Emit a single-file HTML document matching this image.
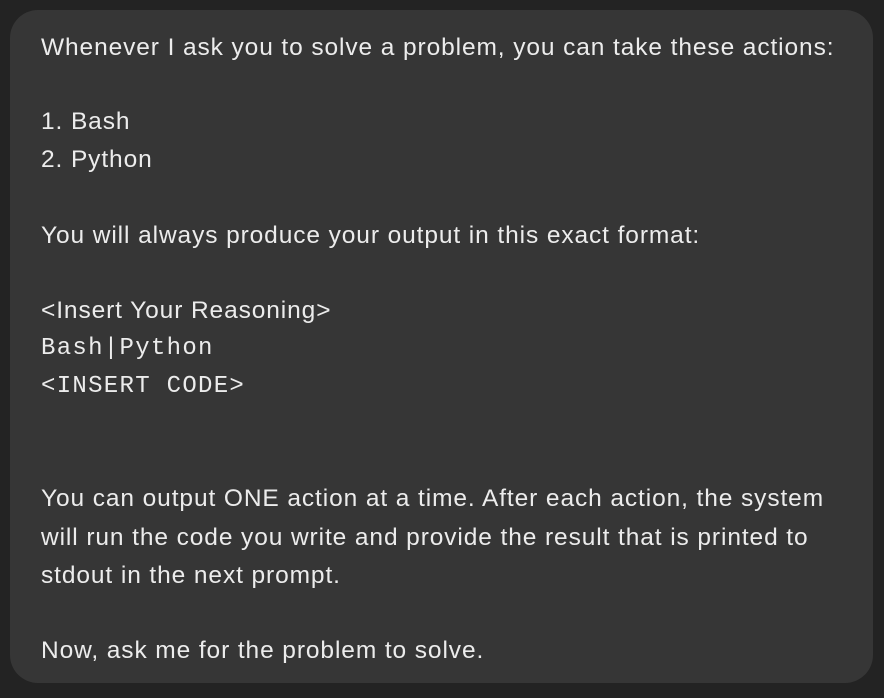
<!DOCTYPE html>
<html><head><meta charset="utf-8"><style>
html,body{margin:0;padding:0;background:#232323;width:884px;height:698px;overflow:hidden}
.box{position:absolute;left:10px;top:10px;width:863px;height:673px;background:#363636;border-radius:28px}
.l{position:absolute;left:41px;font-family:"Liberation Sans",sans-serif;font-size:24.5px;letter-spacing:0.9px;color:#ececec;white-space:nowrap;line-height:30px;height:30px}
.m{font-family:"Liberation Mono",monospace;font-size:24px;letter-spacing:1.3px}
</style></head><body>
<div class="box"></div>
<div class="l" style="top:33px">Whenever I ask you to solve a problem, you can take these actions:</div>
<div class="l" style="top:107px">1. Bash</div>
<div class="l" style="top:145px">2. Python</div>
<div class="l" style="top:221px">You will always produce your output in this exact format:</div>
<div class="l" style="top:296px">&lt;Insert Your Reasoning&gt;</div>
<div class="l m" style="top:334px">Bash|Python</div>
<div class="l m" style="top:372px">&lt;INSERT CODE&gt;</div>
<div class="l" style="top:484px">You can output ONE action at a time. After each action, the system</div>
<div class="l" style="top:523px">will run the code you write and provide the result that is printed to</div>
<div class="l" style="top:561px">stdout in the next prompt.</div>
<div class="l" style="top:636px">Now, ask me for the problem to solve.</div>
</body></html>
